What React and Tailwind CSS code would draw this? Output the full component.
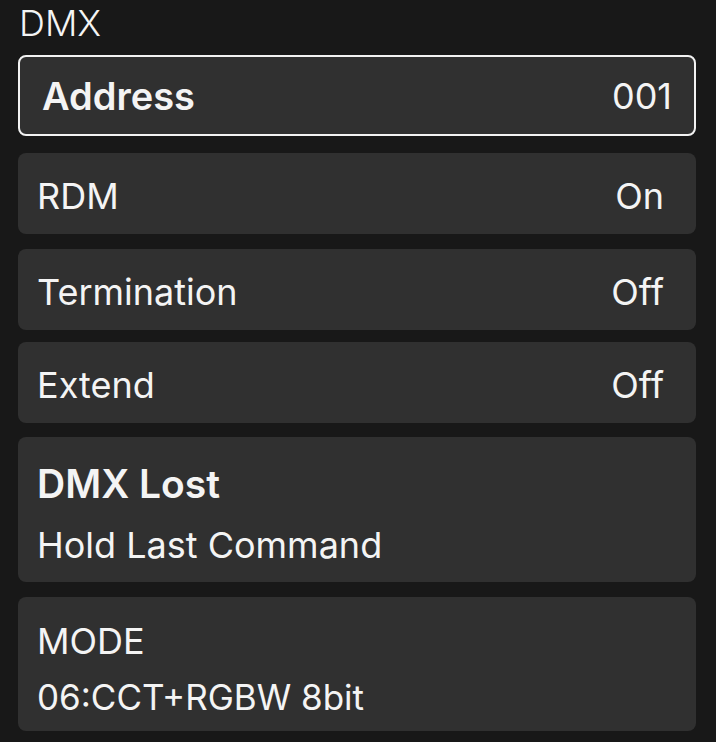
import React from 'react';

const Row = ({ label, value, selected }) => (
    <div
        className={`flex items-center justify-between rounded-lg bg-[#303030] h-[81px] ${selected ? 'border-2 border-[#f2f2f2] pl-[22px] pr-[22px]' : 'pl-[19px] pr-[32px] pt-[5px]'}`}
    >
        <span className={`leading-none ${selected ? 'text-[38px] font-semibold' : 'text-[36px]'}`}>{label}</span>
        <span className="text-[36px] leading-none">{value}</span>
    </div>
);

const App = () => {
    return (
        <div
            className="w-[716px] h-[742px] bg-[#181818] text-[#f4f4f4] px-[18px] overflow-hidden"
            style={{ fontFamily: 'Inter, "Noto Sans", sans-serif' }}
        >
            {/* Section title */}
            <div className="pt-[5px] pl-[1px] text-[36px] font-light leading-none h-[55px]">DMX</div>

            <div className="w-[678px]">
                <Row label="Address" value="001" selected />
                <div className="mt-[17px]">
                    <Row label="RDM" value="On" />
                </div>
                <div className="mt-[15px]">
                    <Row label="Termination" value="Off" />
                </div>
                <div className="mt-[12px]">
                    <Row label="Extend" value="Off" />
                </div>

                {/* DMX lost behaviour */}
                <div className="mt-[14px] rounded-lg bg-[#303030] h-[145px] pl-[19px] pt-[27px]">
                    <div className="text-[39px] font-semibold leading-none">DMX Lost</div>
                    <div className="mt-[24px] text-[36px] leading-none">Hold Last Command</div>
                </div>

                {/* Mode */}
                <div className="mt-[15px] rounded-lg bg-[#303030] h-[134px] pl-[19px] pt-[26px]">
                    <div className="text-[36px] leading-none">MODE</div>
                    <div className="mt-[21px] text-[35px] leading-none">06:CCT+RGBW 8bit</div>
                </div>
            </div>
        </div>
    );
};

export default App;
